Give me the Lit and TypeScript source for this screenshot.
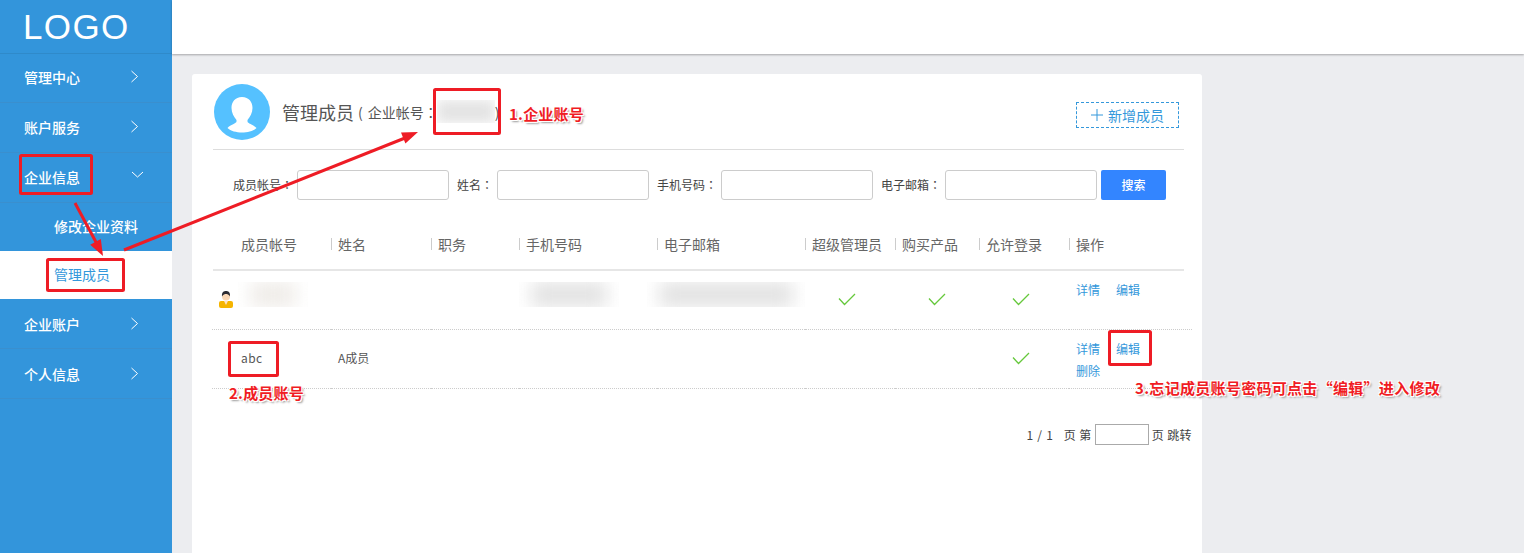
import { LitElement, html, css, svg } from "lit";
import { customElement } from "lit/decorators.js";

const chevR = html`<svg class="chev" width="9" height="13" viewBox="0 0 9 13"><path d="M1.5 1 L7.5 6.5 L1.5 12" fill="none" stroke="#fff" stroke-width="1"/></svg>`;
const chevD = html`<svg class="chevd" width="13" height="7" viewBox="0 0 13 7"><path d="M1 1 L6.500 6 L12 1" fill="none" stroke="#fff" stroke-width="1"/></svg>`;
const check = html`<svg class="check" width="18" height="13" viewBox="0 0 18 13"><path d="M1 5.500 L6.500 11.500 L17 1" fill="none" stroke="#66c83c" stroke-width="1.300"/></svg>`;
const colon = html`<span class="col">：</span>`;

const headers = ["成员帐号", "姓名", "职务", "手机号码", "电子邮箱", "超级管理员", "购买产品", "允许登录", "操作"];

@customElement("app-root")
export class AppRoot extends LitElement {
  static styles = css`
    :host { display: block; height: 100vh; overflow: hidden; position: relative; font-family: "Noto Sans CJK SC", "Liberation Sans", sans-serif; color: #555; background: #ecedf0; }
    .layout { display: flex; height: 100%; }
    .side { width: 172px; flex: none; background: #3395db; color: #fff; }
    .logo { height: 54px; box-sizing: border-box; padding: 1px 0 0 23px; font: 35px/52px "Liberation Sans", sans-serif; letter-spacing: 1.400px; border-bottom: 1px solid #2f8aca; }
    .item { height: 50px; box-sizing: border-box; display: flex; align-items: center; justify-content: space-between; padding: 0 33px 2px 24px; font-size: 14px; font-weight: 500; border-bottom: 1px solid #3a8fce; }
    .item.first { height: 49px; padding-bottom: 3px; }
    .item.low { padding-bottom: 0; }
    .item.open { padding-right: 28px; }
    .chevd { margin-top: -4px; }
    .sub { height: 48px; box-sizing: border-box; display: flex; align-items: center; padding: 0 0 2px 54px; font-size: 14px; font-weight: 500; }
    .sub.on { background: #fff; color: #3498db; font-weight: 400; }
    .main { flex: 1; display: flex; flex-direction: column; min-width: 0; }
    .top { height: 54px; flex: none; background: #fff; box-shadow: 0 1px 2px rgba(0,0,0,.3); }
    .content { flex: 1; padding: 20px 0 0 20px; }
    .card { width: 1010px; height: 100%; box-sizing: border-box; background: #fff; border-radius: 3px 3px 0 0; padding: 10px 18px 0 21px; }
    .head { display: flex; align-items: center; height: 66px; padding-bottom: 10px; box-sizing: border-box; border-bottom: 1px solid #ddd; }
    .avatar { width: 56px; height: 56px; flex: none; margin: 0 12px 0 1px; }
    .title { font-size: 18px; color: #555; }
    .org { font-size: 14px; margin-left: 4px; display: inline-flex; align-items: center; }
    .open-p { margin-right: 5px; }
    .col { font-family: "Noto Sans CJK TC", sans-serif; }
    .blur-wrap { width: 58px; height: 23px; margin: 0 0 0 -1px; overflow: hidden; background: #fff; }
    .blur { display: block; width: 100%; height: 100%; background: #e4e4e4; filter: blur(6px); }
    .add { margin-left: auto; margin-right: 5px; margin-top: 6px; width: 103px; height: 26px; box-sizing: border-box; border: 1px dashed #3498db; color: #3498db; font-size: 14px; display: flex; align-items: center; justify-content: center; gap: 5px; }
    .search { display: flex; align-items: center; padding: 20px 0 0 20px; height: 30px; font-size: 12px; color: #444; }
    .search label { white-space: nowrap; width: 64px; padding-bottom: 2px; }
    .search label.short { width: 40px; }
    .search input { width: 152px; height: 30px; box-sizing: border-box; border: 1px solid #ccc; border-radius: 3px; margin-right: 8px; padding: 0; background: #fff; }
    .search button { width: 65px; height: 30px; margin-left: -4px; padding: 0 0 2px; border: 0; border-radius: 2px; background: #3385ff; color: #fff; font: 500 12px "Noto Sans CJK SC", sans-serif; }
    .table { margin: 20px -8px 0 -1px; display: grid; grid-template-columns: 119px 100px 88px 138px 148px 90px 84px 90px 123px; font-size: 12px; }
    .th { height: 51px; padding-bottom: 2px; box-sizing: border-box; display: flex; align-items: center; font-size: 14px; color: #666; border-bottom: 2px solid #e6e6e6; white-space: nowrap; }
    .th:first-child { padding-left: 28px; margin-left: 1px; }
    .th:nth-child(9) { margin-right: 8px; }
    .th:not(:first-child)::before { content: ""; width: 1px; height: 12px; background: #ccc; margin-right: 6px; }
    .td { height: 59px; box-sizing: border-box; border-bottom: 1px dotted #ccc; display: flex; align-items: center; color: #555; position: relative; }
    .td.c { padding-left: 33px; }
    .check { margin-top: -2px; }
    .td.name { padding: 0 0 3px 7px; }
    .td.first { padding: 0 0 3px 29px; letter-spacing: .4px; }
    .ops { padding: 8px 0 0 7px; display: block; line-height: 22px; color: #3498db; }
    .ops span { margin-right: 16px; }
    .block { position: absolute; top: 11px; height: 25px; overflow: hidden; }
    .block i { display: block; height: 100%; background: #e2e2e2; filter: blur(9px); margin: 0 12px; }
    .block.faint i { background: #efece8; }
    .person { position: absolute; left: 6px; top: 19px; }
    .pager { display: flex; justify-content: flex-end; align-items: center; gap: 3px; margin: 34px -8px 0 0; font-size: 12px; color: #444; height: 22px; letter-spacing: .4px; }
    .pager b { font-weight: 400; margin-right: 7px; letter-spacing: .8px; }
    .pager input { width: 54px; height: 21px; box-sizing: border-box; border: 1px solid #aaa; padding: 0; }
    .overlay { position: absolute; inset: 0; width: 1524px; height: 553px; pointer-events: none; }
    .note { position: absolute; color: #f01c24; font-size: 15px; font-weight: 700; line-height: 20px; white-space: nowrap; text-shadow: 1px 1px 0 #fff, -1px -1px 0 #fff, 1px -1px 0 #fff, -1px 1px 0 #fff, 2px 2px 2px #999; }
    .n1 { left: 509px; top: 104px; letter-spacing: .2px; }
    .n2 { left: 229px; top: 383px; letter-spacing: .2px; }
    .n3 { left: 1135px; top: 378px; letter-spacing: .3px; }
  `;

  private box(x: number, y: number, w: number, h: number) {
    return svg`<rect x=${x} y=${y} width=${w} height=${h} rx="1" fill="none" stroke="#ee1c25" stroke-width="3"/>`;
  }

  render() {
    return html`
      <div class="layout">
        <aside class="side">
          <div class="logo">LOGO</div>
          <div class="item first">管理中心 ${chevR}</div>
          <div class="item">账户服务 ${chevR}</div>
          <div class="item open">企业信息 ${chevD}</div>
          <div class="sub">修改企业资料</div>
          <div class="sub on">管理成员</div>
          <div class="item low">企业账户 ${chevR}</div>
          <div class="item low">个人信息 ${chevR}</div>
        </aside>
        <div class="main">
          <div class="top"></div>
          <div class="content">
            <section class="card">
              <div class="head">
                <svg class="avatar" viewBox="0 0 56 56">
                  <circle cx="28" cy="28" r="28" fill="#55c1ff"/>
                  <path d="M28 13c-7 0-10.500 5-10.500 11 0 5 2.500 9 5 12v1.500c0 2-6 3-9 6.500 3 3 9 4.500 14.500 4.500s11.500-1.500 14.500-4.500c-3-3.500-9-4.500-9-6.500V36c2.500-3 5-7 5-12 0-6-3.500-11-10.500-11z" fill="#fff"/>
                </svg>
                <span class="title">管理成员</span>
                <span class="org"><span class="open-p">(</span>企业帐号${colon}<span class="blur-wrap"><i class="blur"></i></span><span>)</span></span>
                <div class="add">
                  <svg width="12" height="12" viewBox="0 0 12 12"><path d="M6 0V12M0 6H12" stroke="#3498db" stroke-width="1"/></svg>
                  新增成员
                </div>
              </div>
              <div class="search">
                <label>成员帐号${colon}</label><input />
                <label class="short">姓名${colon}</label><input />
                <label>手机号码${colon}</label><input />
                <label>电子邮箱${colon}</label><input />
                <button>搜索</button>
              </div>
              <div class="table">
                ${headers.map((h) => html`<div class="th">${h}</div>`)}

                <div class="td">
                  <svg class="person" width="16" height="18" viewBox="0 0 16 18">
                    <rect x="1" y="11" width="14" height="7" rx="2" fill="#f5b400"/>
                    <path d="M6 11h4l-2 4z" fill="#fde3c8"/>
                    <circle cx="8" cy="6.500" r="4" fill="#fad7b5"/>
                    <path d="M4 6.500C3.500 2 6 1 8 1s4.500 1 4 5.500C11 4.500 9 4 8 4S5 4.500 4 6.500z" fill="#2b2b33"/>
                  </svg>
                  <div class="block faint" style="left:26px;width:70px"><i></i></div>
                </div>
                <div class="td"></div>
                <div class="td"></div>
                <div class="td"><div class="block" style="left:0;width:100px"><i></i></div></div>
                <div class="td"><div class="block" style="left:-10px;width:158px"><i></i></div></div>
                <div class="td c">${check}</div>
                <div class="td c">${check}</div>
                <div class="td c">${check}</div>
                <div class="td ops"><span>详情</span><span>编辑</span></div>

                <div class="td first">abc</div>
                <div class="td name">A成员</div>
                <div class="td"></div>
                <div class="td"></div>
                <div class="td"></div>
                <div class="td"></div>
                <div class="td"></div>
                <div class="td c">${check}</div>
                <div class="td ops"><span>详情</span><span>编辑</span><br /><span>删除</span></div>
              </div>
              <div class="pager">
                <b>1 / 1</b><span>页 第</span><input /><span>页 跳转</span>
              </div>
            </section>
          </div>
        </div>
      </div>
      <svg class="overlay" viewBox="0 0 1524 553">
        ${this.box(20.5, 155.5, 71, 38)}
        ${this.box(47.5, 259.5, 76, 31)}
        ${this.box(434.5, 89.5, 65, 44)}
        ${this.box(229.5, 342.5, 48, 33)}
        ${this.box(1109.5, 331.5, 41, 33)}
        <path d="M75 203 L97 244" stroke="#ee1c25" stroke-width="3" fill="none"/>
        <path d="M103 256 L90.200 244.700 L100.800 239.100 Z" fill="#ee1c25"/>
        <path d="M124 250 L405 138" stroke="#ee1c25" stroke-width="3" fill="none"/>
        <path d="M418 132 L401 132.400 L405.400 143.600 Z" fill="#ee1c25"/>
      </svg>
      <div class="note n1">1.企业账号</div>
      <div class="note n2">2.成员账号</div>
      <div class="note n3">3.忘记成员账号密码可点击“编辑”进入修改</div>
    `;
  }
}
